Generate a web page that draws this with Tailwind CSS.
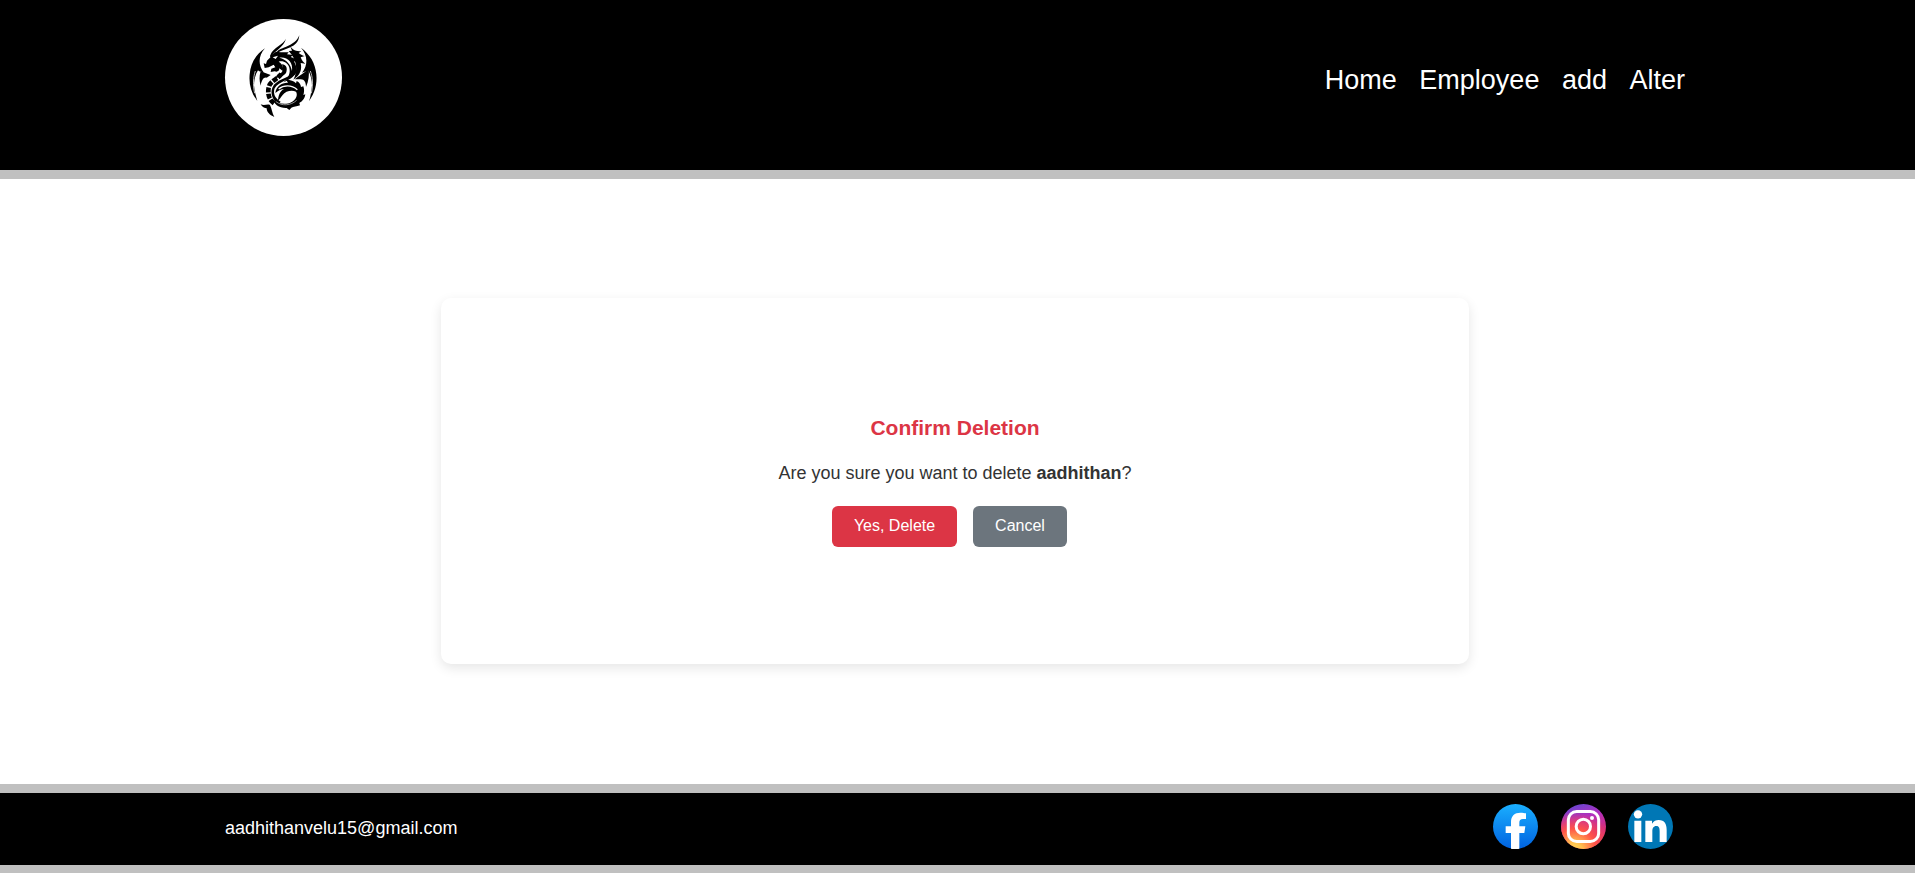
<!DOCTYPE html>
<html lang="en">
<head>
<meta charset="utf-8">
<title>Confirm Deletion</title>
<script src="https://cdn.jsdelivr.net/npm/@tailwindcss/browser@4"></script>
</head>
<body class="flex h-[874px] flex-col overflow-hidden bg-white font-['Liberation_Sans',Arial,sans-serif]">
<header class="flex h-[179px] shrink-0 items-start justify-between border-b-9 border-[#c0c0c0] bg-black pt-[19px] pr-[230px] pl-[225px]">
  <div class="size-[117px] rounded-full bg-white">
    <svg class="size-full" viewBox="-45 -18 351 351" fill="#000">
      <!-- horns -->
      <path d="M90 99 C102 76 130 70 138 41 C130 58 100 68 92 88Z"/>
      <path d="M106 90 C130 66 174 74 178 31 C164 64 130 64 112 79Z"/>
      <!-- head -->
      <path d="M71 115 L78 117 L81 107 L92 96 L90 92 L108 80 L122 82 L146 82 L141 88 L160 90 L152 96 C164 100 168 104 172 112 L162 109 C168 122 172 130 170 142 C160 158 146 166 130 172 C146 158 152 144 148 128 C144 114 130 106 116 110 C126 116 132 126 128 138 L118 130 C118 138 112 142 104 139 L92 141 L94 131 L106 127 L101 119 L86 127 L74 129Z"/>
      <path d="M98 97 L114 92 L107 102Z" fill="#fff"/>
      <path d="M118 98 C142 94 160 112 156 138 C152 118 140 104 118 98Z" fill="#fff"/>
      <path d="M126 118 C138 118 144 130 138 144 C130 156 114 156 102 162 L114 148 C126 146 132 138 126 118Z"/>
      <!-- back spines -->
      <path d="M150 62 C158 76 168 78 184 79 L176 84 C184 90 188 92 194 93 L182 97 C186 108 190 112 196 116 L182 114 C186 132 182 150 160 164 C174 140 172 104 146 78 L156 77Z"/>
      <!-- left wing -->
      <path d="M75 70 C54 92 54 122 72 143 C64 139 58 141 54 136 C46 148 42 166 42 182 C44 200 48 214 52 228 C34 204 26 178 29 148 C32 114 48 88 75 70Z"/>
      <path d="M62 139 L92 150 L80 158 C70 156 65 166 62 182 C58 168 57 154 62 139Z"/>
      <path d="M46 138 C40 156 38 178 44 205" fill="none" stroke="#bbb" stroke-width="3"/>
      <!-- right wing -->
      <path d="M183 68 C204 92 204 122 186 143 C194 139 200 141 204 136 C212 148 216 166 216 182 C214 200 212 214 207 229 C224 204 232 178 229 148 C226 114 210 88 183 68Z"/>
      <path d="M206 132 C190 146 178 152 164 163 L178 163 C192 160 198 170 198 186 C206 168 208 150 206 132Z"/>
      <path d="M211 138 C218 156 220 178 214 205" fill="none" stroke="#bbb" stroke-width="3"/>
      <!-- belly plates -->
      <path d="M124 146 C116 162 90 166 86 188 C82 208 88 226 104 236" fill="none" stroke="#000" stroke-width="14" stroke-dasharray="15 4"/>
      <!-- neck joining the coil -->
      <path d="M168 142 C156 164 116 168 104 190 C98 206 106 222 122 230 L116 238 C98 226 90 206 97 188 C108 164 140 160 168 142Z"/>
      <!-- coil -->
      <path d="M98 222 C112 238 138 240 154 232 C168 224 174 210 168 200 C156 194 136 198 128 210 C122 218 118 224 114 228 C114 212 120 198 132 192 C124 192 116 196 106 204 C108 184 126 172 144 173 L138 164 C152 164 162 168 168 175 L170 168 C178 172 182 178 183 186 L190 184 C194 194 192 204 190 210 L196 208 C194 222 186 230 178 234 L180 241 C170 244 160 246 154 248 L148 255 L140 249 C118 250 102 238 98 222Z"/>
      <path d="M116 192 C130 180 154 178 172 194" fill="none" stroke="#fff" stroke-width="4"/>
      <path d="M108 230 C126 244 152 242 170 226" fill="none" stroke="#aaa" stroke-width="2.500"/>
      <!-- tail -->
      <path d="M62 238 C74 244 80 236 90 240 C96 252 96 264 103 276 C88 270 80 260 80 250 C74 250 66 246 62 238Z"/>
    </svg>
  </div>
  <nav class="mt-[43px] flex gap-[22.5px] text-[27px] leading-[36px] text-white">
    <a>Home</a><a>Employee</a><a>add</a><a>Alter</a>
  </nav>
</header>
<main class="flex h-[605px] shrink-0 justify-center pt-[119px] pr-[5px]">
  <section class="flex h-[366px] w-[1028px] flex-col items-center rounded-[10px] bg-white pt-[117px] shadow-[0_4px_12px_rgba(0,0,0,0.1)]">
    <h2 class="text-[21px] leading-[26px] font-bold text-[#dc3545]">Confirm Deletion</h2>
    <p class="mt-[19px] text-[18px] leading-[26px] text-[#333]">Are you sure you want to delete <b>aadhithan</b>?</p>
    <div class="mt-[20px] mr-[11px] flex gap-4 text-[16px] leading-[39px] text-white">
      <button class="h-[41px] w-[125px] rounded-[6px] bg-[#dc3545] pb-0.5">Yes, Delete</button>
      <button class="h-[41px] w-[94px] rounded-[6px] bg-[#6c757d] pb-0.5">Cancel</button>
    </div>
  </section>
</main>
<footer class="flex h-[89px] shrink-0 items-start justify-between border-t-9 border-b-8 border-[#c0c0c0] bg-black pr-[242px] pl-[225px]">
  <p class="mt-[21px] text-[18px] leading-[28px] text-white">aadhithanvelu15@gmail.com</p>
  <div class="mt-[11px] flex gap-[22.5px]">
    <svg class="size-[45px]" viewBox="0 0 135 135">
      <defs><linearGradient id="fb" x2="0" y2="1"><stop stop-color="#1aafff"/><stop offset="1" stop-color="#0062e0"/></linearGradient></defs>
      <circle cx="67.500" cy="67.500" r="67.500" fill="url(#fb)"/>
      <path fill="#fff" d="M54 134V87H38V67H54V55C54 35 65 26 82 26C89 26 95 27 99 28V45H90C82 45 79 49 79 56V67H97L94 87H79V134A67 67 0 0 1 54 134Z"/>
    </svg>
    <svg class="size-[45px]" viewBox="0 0 135 135">
      <defs>
        <linearGradient id="ig" x1=".35" y1="0" x2=".65" y2="1"><stop stop-color="#6a45d0"/><stop offset=".3" stop-color="#b02fc0"/><stop offset=".65" stop-color="#d42f7d"/><stop offset="1" stop-color="#e8405a"/></linearGradient>
        <radialGradient id="ig2" cx=".3" cy="1.02" r=".85"><stop stop-color="#ffdd55"/><stop offset=".2" stop-color="#ffc050"/><stop offset=".55" stop-color="#ff5548"/><stop offset="1" stop-color="#ff4050" stop-opacity="0"/></radialGradient>
      </defs>
      <circle cx="67.500" cy="67.500" r="67.500" fill="url(#ig)"/>
      <circle cx="67.500" cy="67.500" r="67.500" fill="url(#ig2)"/>
      <g fill="none" stroke="#fff" stroke-width="9"><rect x="22" y="22.500" width="91" height="90" rx="25"/><circle cx="67" cy="67.500" r="21.500"/></g>
      <circle cx="93" cy="42" r="6" fill="#fff"/>
    </svg>
    <svg class="size-[45px]" viewBox="0 0 135 135">
      <circle cx="67.500" cy="67.500" r="67.500" fill="#0077b5"/>
      <g fill="#fff"><circle cx="30" cy="31" r="12.500"/><path d="M19 50H40V114H19ZM52 50H72V59C77 51 84 48 92 48C110 48 116 60 116 78V114H95V83C95 74 94 66 85 66C76 66 73 73 73 82V114H52Z"/></g>
    </svg>
  </div>
</footer>
</body>
</html>
